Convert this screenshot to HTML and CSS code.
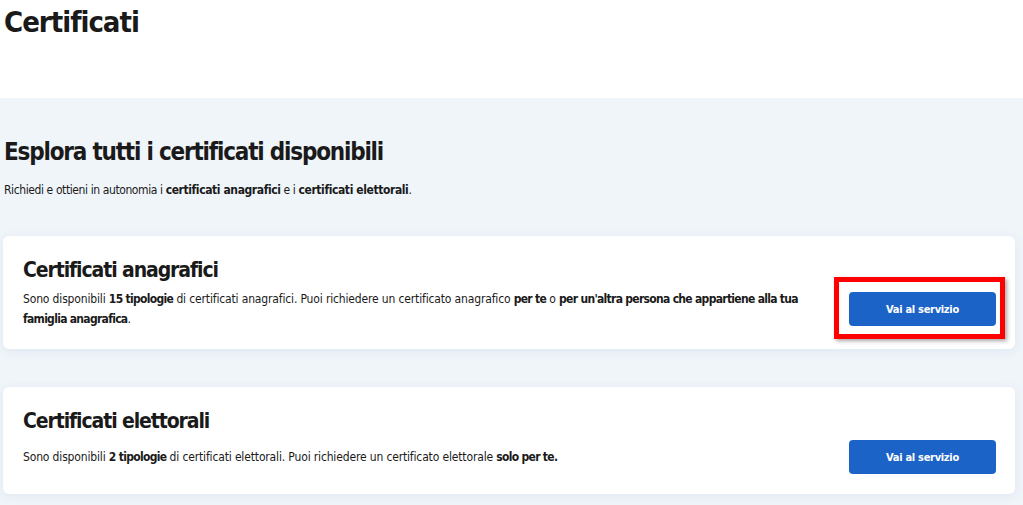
FILE: index.html
```html
<!DOCTYPE html>
<html lang="it">
<head>
    <meta charset="UTF-8">
    <meta name="viewport" content="width=device-width, initial-scale=1.0">
    <title>Certificati</title>
    <link rel="stylesheet" href="styles.css">
</head>
<body>
    <div class="page-head">
        <h1>Certificati</h1>
    </div>

    <div class="explore">
        <h2>Esplora tutti i certificati disponibili</h2>
        <p class="intro">Richiedi e ottieni in autonomia i <strong>certificati anagrafici</strong> e i <strong>certificati elettorali</strong>.</p>

        <div class="card">
            <h3>Certificati anagrafici</h3>
            <div class="card-row">
                <p>Sono disponibili <strong>15 tipologie</strong> di certificati anagrafici. Puoi richiedere un certificato anagrafico <strong>per te</strong> o <strong>per un'altra persona che appartiene alla tua famiglia anagrafica</strong>.</p>
                <div class="btn-wrap">
                    <button class="btn">Vai al servizio</button>
                    <span class="highlight"></span>
                </div>
            </div>
        </div>

        <div class="card">
            <h3>Certificati elettorali</h3>
            <div class="card-row">
                <p>Sono disponibili <strong>2 tipologie</strong> di certificati elettorali. Puoi richiedere un certificato elettorale <strong>solo per te.</strong></p>
                <div class="btn-wrap">
                    <button class="btn">Vai al servizio</button>
                </div>
            </div>
        </div>
    </div>
</body>
</html>
```

FILE: styles.css
```css
body {
    font-family: "DejaVu Sans Condensed", "Liberation Sans", sans-serif;
    color: #1a1a1a;
    margin: 0;
    background-color: #fff;
}
.page-head {
    height: 98px;
    padding-left: 4px;
}
h1 {
    margin: 0;
    padding-top: 4px;
    font-size: 29px;
    font-weight: bold;
    letter-spacing: -1px;
    line-height: 36px;
}
.explore {
    background-color: #f0f5fa;
    padding: 38px 8px 12px 3px;
}
h2 {
    margin: 0 0 0 1px;
    font-size: 24px;
    font-weight: bold;
    letter-spacing: -1.2px;
    line-height: 32px;
}
.intro {
    margin: 12px 0 36px 1px;
    font-size: 12px;
    letter-spacing: -0.4px;
    line-height: 20px;
}
.card {
    background-color: #fff;
    border-radius: 6px;
    box-shadow: 0 2px 12px rgba(30, 60, 120, 0.08);
    padding: 19px 19px 20px 20px;
    margin-bottom: 38px;
}
h3 {
    margin: 0;
    font-size: 21px;
    font-weight: bold;
    letter-spacing: -1.1px;
    line-height: 30px;
}
.card-row {
    display: flex;
    align-items: center;
    justify-content: space-between;
    margin-top: 4px;
}
.card-row p {
    margin: 0;
    font-size: 12px;
    letter-spacing: -0.15px;
    line-height: 20px;
    max-width: 790px;
}
.card-row strong {
    letter-spacing: -0.7px;
}
.btn-wrap {
    position: relative;
    flex-shrink: 0;
}
.btn {
    display: block;
    width: 147px;
    height: 34px;
    border: none;
    border-radius: 4px;
    background-color: #1b63c6;
    color: #fff;
    font-family: inherit;
    font-size: 11px;
    font-weight: bold;
    letter-spacing: -0.3px;
}
/* annotation box around the first button */
.highlight {
    position: absolute;
    left: -15px;
    top: -15px;
    right: -9px;
    bottom: -13px;
    border: 5px solid #f00;
    box-shadow: 2px 2px 4px rgba(0, 0, 0, 0.35);
}
```
